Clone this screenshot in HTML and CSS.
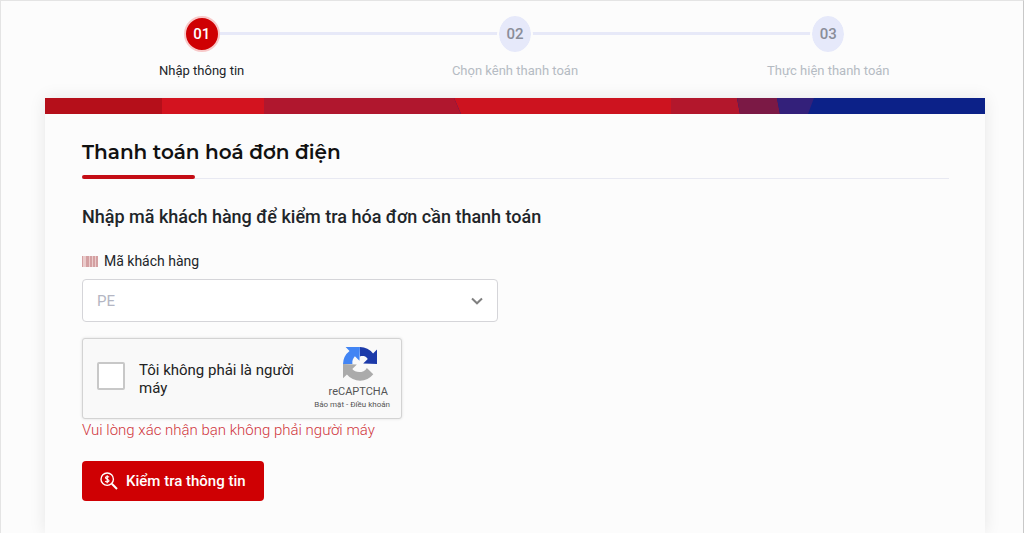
FILE: index.html
```html
<!DOCTYPE html>
<html lang="vi">
<head>
<meta charset="utf-8">
<meta name="viewport" content="width=device-width, initial-scale=1">
<title>Thanh toán hoá đơn điện</title>
<link rel="stylesheet" href="styles.css">
</head>
<body>
<div class="page">
  <ol class="steps">
    <li class="step step-active"><span class="step-number">01</span><span class="step-label">Nhập thông tin</span></li>
    <li class="step"><span class="step-number">02</span><span class="step-label">Chọn kênh thanh toán</span></li>
    <li class="step"><span class="step-number">03</span><span class="step-label">Thực hiện thanh toán</span></li>
  </ol>

  <main class="card">
    <svg class="banner" viewBox="0 0 940 16" preserveAspectRatio="none" aria-hidden="true">
      <rect width="940" height="16" fill="#0c2188"/>
      <path d="M0 0H117V16H0z" fill="#b50f1a"/>
      <path d="M117 0H219V16H117z" fill="#d3131f"/>
      <path d="M219 0H409L416 16H219z" fill="#b0172e"/>
      <path d="M409 0H626V16H416z" fill="#cd131f"/>
      <path d="M626 0H692L695 16H626z" fill="#b3172c"/>
      <path d="M692 0H732L735 16H695z" fill="#7b1945"/>
      <path d="M732 0H769L763 16H735z" fill="#33207a"/>
    </svg>
    <div class="card-body">
      <h1 class="title">Thanh toán hoá đơn điện</h1>
      <form class="form">
        <h2 class="subtitle">Nhập mã khách hàng để kiểm tra hóa đơn cần thanh toán</h2>
        <label class="field-label" for="customer">
          <svg class="barcode" viewBox="0 0 16 11" aria-hidden="true">
            <path d="M0 0H16V11H0z" fill="#ebcccc"/>
            <path d="M0 0H1V11H0zM4 0H7V11H4zM8 0H10V11H8zM11 0H13V11H11zM14 0H16V11H14z" fill="#d4a0a2"/>
          </svg>
          Mã khách hàng
        </label>
        <div class="select-wrap">
          <select class="select" id="customer"><option>PE</option></select>
          <svg class="chevron" viewBox="0 0 12 8" aria-hidden="true"><path d="M1 1.5 6 6.3 11 1.5" fill="none" stroke="#808080" stroke-width="2"/></svg>
        </div>
        <div class="captcha">
          <input class="captcha-box" type="checkbox" id="robot">
          <label class="captcha-label" for="robot">Tôi không phải là người máy</label>
          <div class="captcha-brand">
            <svg class="captcha-logo" viewBox="0 0 64 64" aria-hidden="true">
              <path d="M64 31.955V4.9l-7.4 7.4A31.9 31.9 0 0 0 31.955 0v17.7C35.5 16.9 42.5 16 46.6 22.4l-8.6 8.6z" fill="#1c3aa9"/>
              <path d="M31.9 0H4.9l7.4 7.4A31.9 31.9 0 0 0 0 32h17.7c-.8-5.500 1-10.600 4.700-14.600l8.600 8.600z" fill="#4285f4"/>
              <path d="M0 32v27l7.400-7.400A31.900 31.900 0 0 0 57 51.500L44.900 39.300C39 50 23 49 17.500 41.600l8.600-8.600z" fill="#ababab"/>
            </svg>
            <span class="captcha-name">reCAPTCHA</span>
            <span class="captcha-links"><a href="#">Bảo mật</a> - <a href="#">Điều khoản</a></span>
          </div>
        </div>
        <p class="error">Vui lòng xác nhận bạn không phải người máy</p>
        <button class="submit" type="button">
          <svg class="search" viewBox="0 0 18 18" aria-hidden="true">
            <g fill="none" stroke="#fff">
              <circle cx="7.200" cy="7.200" r="6.200" stroke-width="1.400"/>
              <path d="M11.800 11.800 17 17" stroke-width="2"/>
              <path d="M9 5.300C8.500 4.400 5.500 4.200 5.500 5.800S9 7 9 8.700 5.900 10.200 5.300 9M7.200 3.300V11.200" stroke-width="1.200"/>
            </g>
          </svg>
          Kiểm tra thông tin
        </button>
      </form>
    </div>
  </main>
</div>
</body>
</html>
```
FILE: styles.css
```css
* {
  box-sizing: border-box;
}

body {
  margin: 0;
  background: #fcfcfc;
  color: #212529;
  font-family: Roboto, "Noto Sans", sans-serif;
}

.page {
  display: flex;
  flex-direction: column;
  min-height: 100vh;
  padding: 15px 38px 0 44px;
  border: 1px solid #e4e4e4;
  border-right-color: #c8c8c8;
  border-bottom-color: #b4b4b4;
}

.steps {
  display: grid;
  grid-template-columns: repeat(3, 1fr);
  margin: 0 0 18px;
  padding: 0;
  list-style: none;
}

.step {
  position: relative;
  display: flex;
  flex-direction: column;
  align-items: center;
  gap: 10px;
  color: #b5bbc3;
}

.step + .step::before {
  content: "";
  position: absolute;
  top: 16px;
  right: 50%;
  width: 100%;
  height: 3px;
  background: #e7e9f8;
}

.step-number {
  position: relative;
  z-index: 1;
  display: flex;
  align-items: center;
  justify-content: center;
  width: 36px;
  height: 36px;
  border: 2px solid #fcfcfc;
  border-width: 0 2px;
  border-radius: 50%;
  background: #e6e9fa;
  background-clip: padding-box;
  color: #8a8d99;
  font-size: 15px;
  font-weight: 500;
}

.step-active .step-number {
  border: 2px solid #f8c9c9;
  background: #cf0003;
  color: #fff;
}

.step-label {
  font-size: 13px;
  line-height: 18px;
}

.step-active {
  color: #212529;
}

.card {
  flex: 1;
  background: #fcfcfc;
  box-shadow: 0 0 16px rgba(0, 0, 0, 0.09);
  clip-path: inset(-20px -20px 0 -20px);
}

.banner {
  display: block;
  width: 100%;
  height: 16px;
}

.card-body {
  padding: 24px 36px 32px 37px;
}

.title {
  position: relative;
  margin: 0 0 24px;
  padding-bottom: 12px;
  border-bottom: 1px solid #e8e9f2;
  color: #111;
  font-family: Montserrat, Inter, sans-serif;
  font-size: 20px;
  font-weight: 600;
  line-height: 28px;
}

.title::after {
  content: "";
  position: absolute;
  left: 0;
  bottom: -1px;
  width: 113px;
  height: 4px;
  border-radius: 2px;
  background: #c40d15;
}

.form {
  display: flex;
  flex-direction: column;
  align-items: flex-start;
}

.subtitle {
  margin: 0 0 20px;
  font-size: 18px;
  font-weight: 500;
  line-height: 28px;
}

.field-label {
  display: flex;
  align-items: center;
  gap: 6px;
  margin-bottom: 8px;
  font-size: 14px;
  line-height: 20px;
}

.barcode {
  width: 16px;
  height: 11px;
}

.select-wrap {
  display: grid;
  align-items: center;
  width: 48%;
  margin-bottom: 16px;
}

.select {
  grid-area: 1 / 1;
  width: 100%;
  height: 43px;
  padding: 0 14px;
  border: 1px solid #d5d5d9;
  border-radius: 4px;
  background: #fff;
  color: #b4b6c3;
  font: 15px Roboto, sans-serif;
  appearance: none;
}

.chevron {
  grid-area: 1 / 1;
  justify-self: end;
  width: 12px;
  height: 8px;
  margin-right: 15px;
  pointer-events: none;
}

.captcha {
  display: flex;
  align-items: center;
  width: 320px;
  height: 81px;
  padding: 0 11px 0 14px;
  border: 1px solid #d3d3d3;
  border-radius: 3px;
  background: #f9f9f9;
  box-shadow: 0 0 3px rgba(0, 0, 0, 0.12);
}

.captcha-box {
  flex: none;
  width: 28px;
  height: 28px;
  margin: 0 14px 6px 0;
  border: 2px solid #c8c8c8;
  border-radius: 2px;
  background: #fff;
  appearance: none;
}

.captcha-label {
  flex: 1;
  color: #222;
  font-size: 15px;
  line-height: 18px;
}

.captcha-brand {
  display: flex;
  flex-direction: column;
  align-items: flex-end;
  color: #555;
}

.captcha-logo {
  width: 34px;
  height: 34px;
  margin: 0 13px 4px 0;
}

.captcha-name {
  margin-right: 2px;
  font-size: 11px;
  line-height: 14px;
}

.captcha-links {
  font-size: 8px;
  line-height: 12px;
}

.captcha-links a {
  color: inherit;
  text-decoration: none;
}

.error {
  margin: 0 0 20px;
  color: #d0363c;
  font-size: 15px;
  font-weight: 300;
  line-height: 22px;
}

.submit {
  display: flex;
  align-items: center;
  gap: 8px;
  height: 40px;
  padding: 0 18px;
  border: 0;
  border-radius: 4px;
  background: #cf0003;
  color: #fff;
  font: 500 15px Roboto, sans-serif;
}

.search {
  width: 18px;
  height: 18px;
}
```
